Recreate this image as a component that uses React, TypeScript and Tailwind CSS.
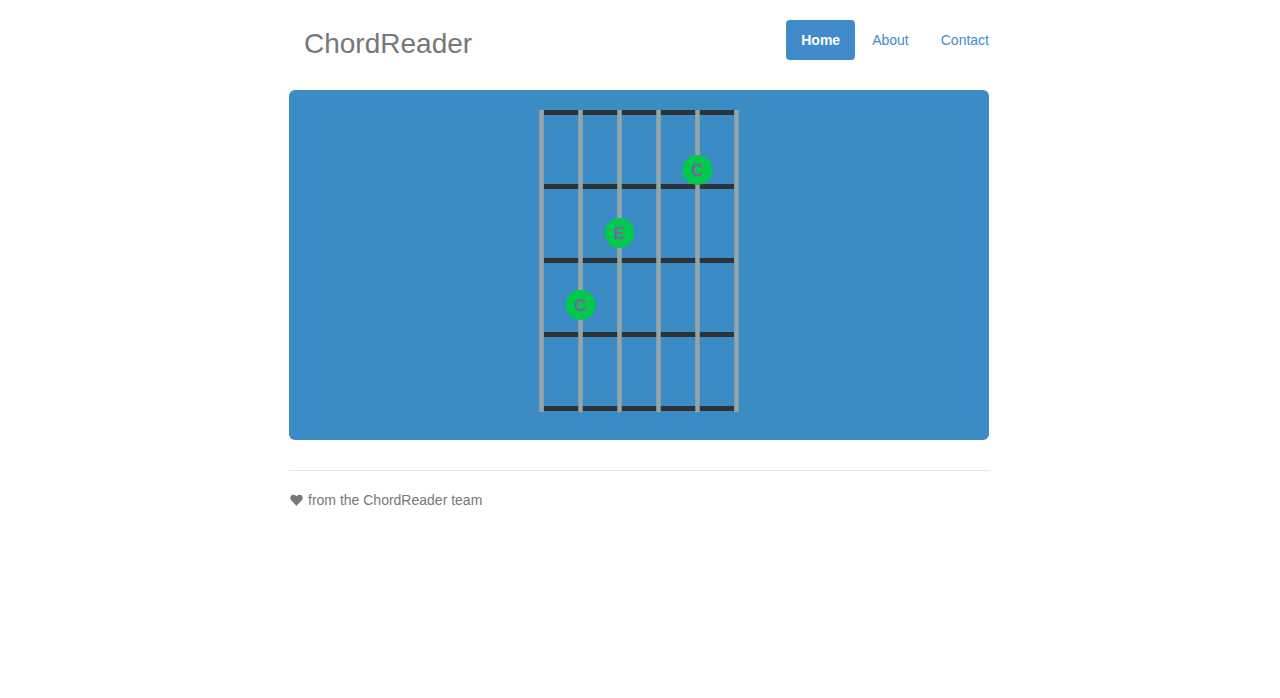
const strings = [2.5, 41.5, 80.5, 119.5, 158.5, 197.5];
const frets = [0, 74, 148, 222, 296];

const notes = [
  { x: 158.5, y: 60, label: "C" },
  { x: 80.5, y: 123, label: "E" },
  { x: 41.5, y: 195, label: "C" },
];

function Fretboard() {
  return (
    <svg width="200" height="302" viewBox="0 0 200 302" className="mx-auto block">
      {frets.map((y) => (
        <rect key={y} x="5" y={y} width="190" height="5" fill="#2f3337" />
      ))}
      {strings.map((x) => (
        <rect key={x} x={x - 2.25} y="0" width="4.5" height="302" fill="#95a5a6" />
      ))}
      {notes.map((n, i) => (
        <g key={i}>
          <circle cx={n.x} cy={n.y} r="15" fill="#00c94b" />
          <text
            x={n.x}
            y={n.y + 6}
            textAnchor="middle"
            fontSize="17"
            fontWeight="bold"
            fill="#7366a6"
            fontFamily="'Liberation Sans', Arial, sans-serif"
          >
            {n.label}
          </text>
        </g>
      ))}
    </svg>
  );
}

export default function App() {
  return (
    <div className="min-h-screen bg-white pr-[2px] font-['Liberation_Sans',Arial,sans-serif]">
      <div className="mx-auto w-[700px]">
        <header className="flex h-[60px] items-start justify-between pt-5">
          <h3 className="mt-1 pl-[15px] text-[28px] leading-[40px] font-normal text-[#777]">ChordReader</h3>
          <nav className="flex gap-[2px] text-[14px] leading-5">
            <a className="rounded-[4px] bg-[#428bca] px-[15px] py-[10px] font-bold text-white">Home</a>
            <a className="px-[15px] py-[10px] text-[#428bca]">About</a>
            <a className="py-[10px] pl-[15px] text-[#428bca]">Contact</a>
          </nav>
        </header>

        <div className="mt-[30px] rounded-[6px] bg-[#3b8bc5] pt-5 pb-[28px]">
          <Fretboard />
        </div>

        <footer className="mt-[30px] border-t border-[#e5e5e5] pt-[19px] text-[14px] leading-5 text-[#777]">
          <span className="inline-flex items-center gap-[5px]">
            <svg width="13" height="12" viewBox="0 0 24 22" className="ml-[1px]">
              <path
                d="M12 21.5 2.5 12C-.5 9 .2 3.6 4 1.8 7 .4 10.2 1.7 12 4.3 13.8 1.7 17 .4 20 1.8c3.8 1.8 4.5 7.2 1.5 10.2Z"
                fill="#777"
              />
            </svg>
            from the ChordReader team
          </span>
        </footer>
      </div>
    </div>
  );
}
